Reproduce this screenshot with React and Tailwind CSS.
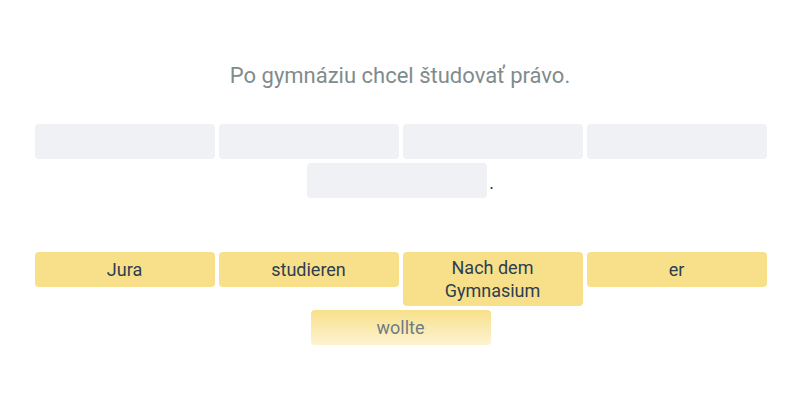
import React from "react";

const blanks = [0, 1, 2, 3];
const words = ["Jura", "studieren", "Nach dem Gymnasium", "er"];

export default function App() {
  return (
    <div
      className="w-[800px] h-[400px] bg-white flex flex-col items-center pt-[61px]"
      style={{ fontFamily: "Roboto, 'Noto Sans', sans-serif" }}
    >
      <div className="text-[22px] leading-[30px] text-[#7f8c8d]">
        Po gymnáziu chcel študovať právo.
      </div>

      <div className="mt-[33px] w-[736px] pl-[1px] flex flex-wrap justify-center gap-[4px]">
        {blanks.map((i) => (
          <div key={i} className="w-[180px] h-[35px] rounded bg-[#f0f1f5]" />
        ))}
        <div className="flex items-end">
          <div className="w-[180px] h-[35px] rounded bg-[#f0f1f5]" />
          <span className="text-[18px] leading-[24px] text-[#2c3e50] ml-[2px] mb-[3px]">.</span>
        </div>
      </div>

      <div className="mt-[54px] w-[736px] pl-[1px] flex flex-wrap justify-center items-start gap-[4px]">
        {words.map((w) => (
          <div
            key={w}
            className="w-[180px] min-h-[35px] rounded bg-[#f8e08a] flex items-center justify-center text-center px-3 py-[4px] text-[18px] leading-[23px] text-[#2c3e50]"
          >
            {w}
          </div>
        ))}
        <div className="w-[180px] h-[35px] rounded bg-gradient-to-b from-[#f8e08a] to-[#fdf3d1] flex items-center justify-center text-[18px] leading-[23px] text-[#6f7b84]">
          wollte
        </div>
      </div>
    </div>
  );
}
